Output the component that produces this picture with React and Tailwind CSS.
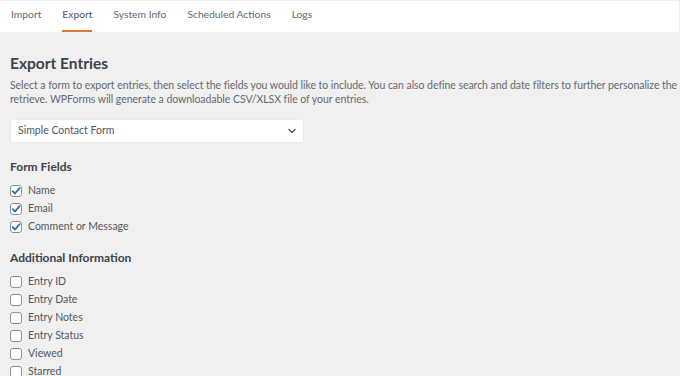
import React from "react";

const Check = ({ checked, label }) => (
  <label className="flex items-center h-[18px] gap-[6px]">
    <span className="w-[12px] h-[12px] rounded-[3px] border border-[#8c8f94] bg-white flex items-center justify-center shrink-0">
      {checked && (
        <svg width="10" height="10" viewBox="0 0 10 10">
          <path d="M1.6 5.2 L4 7.5 L8.6 2.2" fill="none" stroke="#2271b1" strokeWidth="1.8" strokeLinecap="round" strokeLinejoin="round" />
        </svg>
      )}
    </span>
    <span className="text-[10.5px] text-[#50575e]">{label}</span>
  </label>
);

export default function App() {
  const tabs = ["Import", "Export", "System Info", "Scheduled Actions", "Logs"];
  return (
    <div className="w-[680px] h-[376px] overflow-hidden bg-[#f0f0f1] pt-[1px] pr-[1px]" style={{ fontFamily: 'Lato, "Open Sans", sans-serif' }}>
      <div className="bg-white h-[31px] flex items-stretch pl-[11px] gap-[21px]">
        {tabs.map((t) => (
          <div key={t} className={"relative flex items-center text-[10.3px] pb-[3px] " + (t === "Export" ? "text-[#50575e]" : "text-[#646970]")}>
            {t}
            {t === "Export" && <span className="absolute left-0 right-0 bottom-0 h-[2px] bg-[#e27730]" />}
          </div>
        ))}
      </div>
      <div className="px-[10px]">
        <h1 className="text-[15.5px] font-bold text-[#3c434a] mt-[21px] leading-[20px]">Export Entries</h1>
        <p className="text-[10.5px] tracking-[-0.05px] leading-[14px] text-[#646970] mt-[5px] w-[670px]">
          Select a form to export entries, then select the fields you would like to include. You can also define search and date filters to further personalize the retrieve. WPForms will generate a downloadable CSV/XLSX file of your entries.
        </p>
        <div className="mt-[13px] w-[294px] h-[24px] bg-white rounded-[3px] border border-[#ebebeb] flex items-center justify-between pl-[7px] pr-[6px]">
          <span className="text-[10.5px] text-[#50575e]">Simple Contact Form</span>
          <svg width="10" height="10" viewBox="0 0 10 10">
            <path d="M2 3.5 L5 6.5 L8 3.5" fill="none" stroke="#50575e" strokeWidth="1.4" strokeLinecap="round" strokeLinejoin="round" />
          </svg>
        </div>
        <h2 className="text-[12px] font-bold text-[#3c434a] mt-[16px] leading-[16px]">Form Fields</h2>
        <div className="mt-[7px] flex flex-col">
          <Check checked label="Name" />
          <Check checked label="Email" />
          <Check checked label="Comment or Message" />
        </div>
        <h2 className="text-[12px] font-bold text-[#3c434a] mt-[14px] leading-[16px]">Additional Information</h2>
        <div className="mt-[7px] flex flex-col">
          <Check label="Entry ID" />
          <Check label="Entry Date" />
          <Check label="Entry Notes" />
          <Check label="Entry Status" />
          <Check label="Viewed" />
          <Check label="Starred" />
        </div>
      </div>
    </div>
  );
}
